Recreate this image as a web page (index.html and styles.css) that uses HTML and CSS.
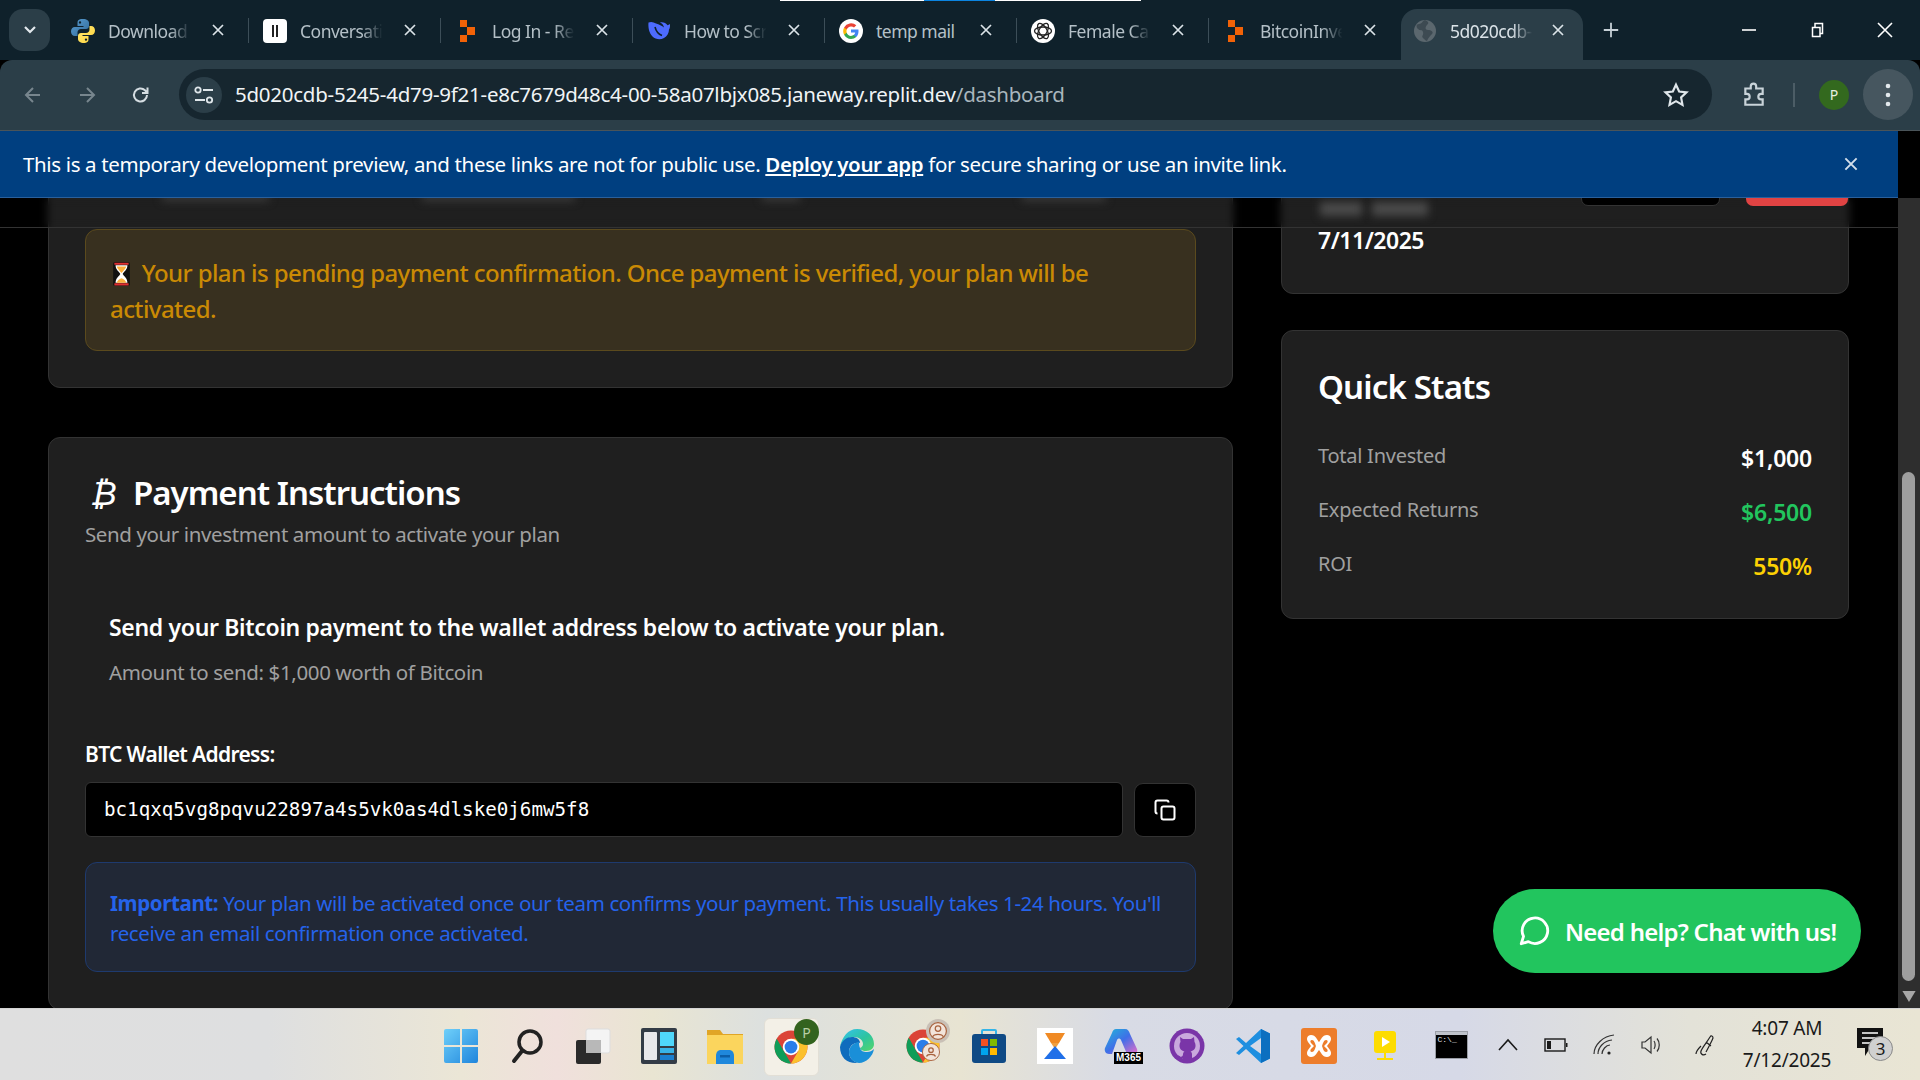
FILE: index.html
```html
<!DOCTYPE html>
<html lang="en">
<head>
<meta charset="utf-8">
<title>Dashboard</title>
<link rel="stylesheet" href="styles.css">
</head>
<body>
<svg class="defs" width="0" height="0" aria-hidden="true">
  <defs>
    <symbol id="x" viewBox="0 0 16 16"><path d="M3 3l10 10M13 3L3 13" fill="none" stroke="currentColor" stroke-width="1.7"/></symbol>
    <symbol id="replit" viewBox="0 0 24 24"><path d="M5 1h7v7H5zM12 8h8v8h-8zM5 16h7v7H5z" fill="#f26207"/></symbol>
    <symbol id="chrome" viewBox="0 0 48 48">
      <circle cx="24" cy="24" r="22" fill="#db4437"/>
      <path d="M5 13l9.5 16.5L24 46A22 22 0 0 1 5 13z" fill="#0f9d58"/>
      <path d="M43 13a22 22 0 0 1-19 33l9.5-16.5L24 13z" fill="#fbc02d"/>
      <circle cx="24" cy="24" r="11" fill="#fff"/><circle cx="24" cy="24" r="8.5" fill="#2b7de9"/>
    </symbol>
    <linearGradient id="winG" x1="0" y1="0" x2="1" y2="1"><stop offset="0" stop-color="#6fd0fa"/><stop offset="1" stop-color="#1f85dc"/></linearGradient>
    <linearGradient id="edgeG" x1="0" y1="0" x2="1" y2="1"><stop offset="0" stop-color="#35c1f1"/><stop offset=".55" stop-color="#2dc4a0"/><stop offset="1" stop-color="#54d66a"/></linearGradient>
    <linearGradient id="m365G" x1="0" y1="0" x2="1" y2="1"><stop offset="0" stop-color="#20b8d8"/><stop offset=".5" stop-color="#3f6fe8"/><stop offset="1" stop-color="#e86fc8"/></linearGradient>
    <linearGradient id="pyB" x1="0" y1="0" x2="1" y2="1"><stop offset="0" stop-color="#5a9fd4"/><stop offset="1" stop-color="#306998"/></linearGradient>
    <linearGradient id="pyY" x1="0" y1="0" x2="1" y2="1"><stop offset="0" stop-color="#ffe873"/><stop offset="1" stop-color="#ffd43b"/></linearGradient>
  </defs>
</svg>

<div class="load-bar"><span class="lb-white"></span><span class="lb-blue"></span><span class="lb-white"></span></div>

<header class="tabstrip">
  <button class="tab-search"><svg width="14" height="10" viewBox="0 0 14 10"><path d="M2 2l5 5 5-5" fill="none" stroke="#e3e9ed" stroke-width="2.2"/></svg></button>
  <div class="tab">
    <svg class="fav" viewBox="0 0 24 24"><path d="M12 0C7 0 6.5 2 6.5 4v3H12.500v1H4C1.500 8 0 10 0 12.500S1.500 17 4 17h2.500v-3.500c0-2 1.500-3.500 3.500-3.500h5c1.700 0 3-1.300 3-3V4c0-2-2-4-6-4zM9 2.200a1.200 1.200 0 1 1 0 2.400 1.200 1.200 0 0 1 0-2.400z" fill="url(#pyB)"/><path d="M12 24c5 0 5.500-2 5.500-4v-3H11.500v-1H20c2.500 0 4-2 4-4.500S22.500 7 20 7h-1.500v3.500c0 2-1.500 3.500-3.500 3.500h-5c-1.700 0-3 1.300-3 3V20c0 2 2 4 6 4zm3-2.200a1.200 1.200 0 1 1 0-2.400 1.200 1.200 0 0 1 0 2.400z" fill="url(#pyY)"/></svg>
    <span class="tab-title">Download</span><svg class="tab-x"><use href="#x"/></svg>
  </div>
  <div class="tab">
    <svg class="fav" viewBox="0 0 24 24"><rect width="24" height="24" rx="4" fill="#fff"/><path d="M9 6h2v12H9zM13 6h2v12h-2z" fill="#222"/></svg>
    <span class="tab-title">Conversation</span><svg class="tab-x"><use href="#x"/></svg>
  </div>
  <div class="tab">
    <svg class="fav" viewBox="0 0 24 24"><use href="#replit"/></svg>
    <span class="tab-title">Log In - Replit</span><svg class="tab-x"><use href="#x"/></svg>
  </div>
  <div class="tab">
    <svg class="fav" viewBox="0 0 24 24"><path d="M23 5c-1 .6-1.500 1-2.500 1.200C19 4 16 2.800 13 3.500c2 .8 3.500 2.500 4 5-2-1.500-5-3.500-8-4C6.500 3 4 2.500 1.500 3.500 1 8 2 14 5.500 17.500c3 3 8 3.500 11.500 1.500 3-1.500 5-5 5-8.500.7-.8 1.200-2.500 1-5.500z" fill="#4d6bfe"/><path d="M8 8c1 4 3 7 7 8.500" fill="none" stroke="#0f212b" stroke-width="1.600"/></svg>
    <span class="tab-title">How to Scrape</span><svg class="tab-x"><use href="#x"/></svg>
  </div>
  <div class="tab">
    <svg class="fav" viewBox="0 0 24 24"><circle cx="12" cy="12" r="12" fill="#fff"/><path d="M19.500 12.200c0-.6 0-1.100-.1-1.600H12v3h4.200a3.600 3.600 0 0 1-1.600 2.400v2h2.600c1.500-1.400 2.300-3.400 2.300-5.800z" fill="#4285f4"/><path d="M12 20c2.100 0 3.900-.7 5.200-1.900l-2.600-2c-.7.500-1.600.8-2.600.8-2 0-3.700-1.400-4.300-3.200H5.100v2.100A8 8 0 0 0 12 20z" fill="#34a853"/><path d="M7.700 13.700a4.800 4.800 0 0 1 0-3.100V8.500H5.100a8 8 0 0 0 0 7.300z" fill="#fbbc05"/><path d="M12 7.400c1.200 0 2.200.4 3 1.200l2.300-2.300A8 8 0 0 0 5.100 8.500l2.600 2.100c.6-1.800 2.300-3.200 4.300-3.200z" fill="#ea4335"/></svg>
    <span class="tab-title tab-title-full">temp mail</span><svg class="tab-x"><use href="#x"/></svg>
  </div>
  <div class="tab">
    <svg class="fav" viewBox="0 0 24 24"><circle cx="12" cy="12" r="12" fill="#fff"/><g fill="none" stroke="#222" stroke-width="1.300"><ellipse cx="12" cy="12" rx="8.500" ry="4"/><ellipse cx="12" cy="12" rx="8.500" ry="4" transform="rotate(60 12 12)"/><ellipse cx="12" cy="12" rx="8.500" ry="4" transform="rotate(120 12 12)"/></g></svg>
    <span class="tab-title">Female Calls</span><svg class="tab-x"><use href="#x"/></svg>
  </div>
  <div class="tab tab-last">
    <svg class="fav" viewBox="0 0 24 24"><use href="#replit"/></svg>
    <span class="tab-title">BitcoinInvest</span><svg class="tab-x"><use href="#x"/></svg>
  </div>
  <div class="tab tab-active">
    <svg class="fav" viewBox="0 0 24 24"><circle cx="12" cy="12" r="11" fill="#5b676e"/><path d="M12 1c-3 1-3 4-6 4S3 8 5 10s4 0 5 3-2 4 0 6 3 3 4 3c1-3 3-5 5-7s-1-4-4-4-3-3-1-5 2-3-2-5z" fill="#3d4a52"/></svg>
    <span class="tab-title">5d020cdb-5245</span><svg class="tab-x"><use href="#x"/></svg>
  </div>
  <svg class="new-tab" viewBox="0 0 20 20"><path d="M10 2v16M2 10h16" stroke="#c6d0d6" stroke-width="2"/></svg>
  <div class="win-controls">
    <svg class="win-btn" viewBox="0 0 16 16"><path d="M1 8h14" stroke="#fff" stroke-width="1.600"/></svg>
    <svg class="win-btn" viewBox="0 0 16 16"><path d="M3.500 5.500h7.500v9H3.500zM6 5V1.500h7.500V11.500H11.500" fill="none" stroke="#fff" stroke-width="1.500"/></svg>
    <svg class="win-btn" viewBox="0 0 16 16"><path d="M1 1l14 14M15 1L1 15" stroke="#fff" stroke-width="1.600"/></svg>
  </div>
</header>

<nav class="toolbar">
  <svg class="nav-ic dim" viewBox="0 0 20 20"><path d="M17 10H3M10 3l-7 7 7 7" fill="none" stroke="currentColor" stroke-width="2"/></svg>
  <svg class="nav-ic dim" viewBox="0 0 20 20"><path d="M3 10h14M10 3l7 7-7 7" fill="none" stroke="currentColor" stroke-width="2"/></svg>
  <svg class="nav-ic" viewBox="0 0 20 20"><path d="M16 10a6.500 6.500 0 1 1-2-4.700L16.500 8M16.500 2.500V8H11" fill="none" stroke="currentColor" stroke-width="2"/></svg>
  <div class="omnibox">
    <span class="site-info"><svg width="20" height="20" viewBox="0 0 20 20"><g fill="none" stroke="#dfe6ea" stroke-width="1.800"><path d="M9 5h10M1 15h10"/><circle cx="4" cy="5" r="2.700"/><circle cx="15.500" cy="15" r="2.700"/></g></svg></span>
    <span class="url">5d020cdb-5245-4d79-9f21-e8c7679d48c4-00-58a07lbjx085.janeway.replit.dev<span class="url-path">/dashboard</span></span>
    <svg class="star" viewBox="0 0 24 24"><path d="M12 2.500l2.900 6.300 6.800.8-5 4.700 1.300 6.800-6-3.400-6 3.400 1.300-6.800-5-4.700 6.800-.8z" fill="none" stroke="#dfe6ea" stroke-width="2"/></svg>
  </div>
  <svg class="ext" viewBox="0 0 24 24"><path d="M4 6h5V4a2.500 2.500 0 0 1 5 0v2h6v5h-1.500a2.500 2.500 0 0 0 0 5H20v5H4v-5h1.500a2.500 2.500 0 0 0 0-5H4z" fill="none" stroke="#c9d3d9" stroke-width="2"/></svg>
  <span class="tb-divider"></span>
  <span class="avatar">P</span>
  <span class="kebab"><svg width="6" height="24" viewBox="0 0 6 24"><g fill="#e3e9ed"><circle cx="3" cy="3" r="2.300"/><circle cx="3" cy="12" r="2.300"/><circle cx="3" cy="21" r="2.300"/></g></svg></span>
</nav>

<div class="banner">
  <p class="banner-text">This is a temporary development preview, and these links are not for public use. <a class="banner-link">Deploy your app</a> for secure sharing or use an invite link.</p>
  <svg class="banner-x"><use href="#x"/></svg>
</div>

<div class="viewport">
  <main class="page">
    <section class="col-main">
      <div class="card card-plan">
        <div class="alert-pending">
          <svg class="hourglass" viewBox="0 0 16 24" preserveAspectRatio="none"><rect x="1" y="1" width="14" height="22" rx="1.500" fill="#111"/><path d="M3 4h10c0 4-3 6-4 8 1 2 4 4 4 8H3c0-4 3-6 4-8-1-2-4-4-4-8z" fill="#fff"/><path d="M4 5h8c-.5 2-2.500 4-4 6-1.500-2-3.500-4-4-6zM4 20c.5-2 2-3 4-4 2 1 3.500 2 4 4z" fill="#fcb03c"/><path d="M2 2.500h12M2 21.500h12" stroke="#e03030" stroke-width="2"/></svg>
          <span>Your plan is pending payment confirmation. Once payment is verified, your plan will be activated.</span>
        </div>
      </div>
      <div class="card card-pay">
        <div class="pay-head">
          <span class="btc-ic">₿</span>
          <h2 class="pay-title">Payment Instructions</h2>
        </div>
        <p class="pay-sub">Send your investment amount to activate your plan</p>
        <div class="pay-info">
          <h3 class="pay-lead">Send your Bitcoin payment to the wallet address below to activate your plan.</h3>
          <p class="pay-amount">Amount to send: $1,000 worth of Bitcoin</p>
        </div>
        <label class="wallet-label">BTC Wallet Address:</label>
        <div class="wallet-row">
          <div class="wallet-input">bc1qxq5vg8pqvu22897a4s5vk0as4dlske0j6mw5f8</div>
          <button class="copy-btn"><svg width="24" height="24" viewBox="0 0 24 24" fill="none" stroke="#fff" stroke-width="2"><rect x="8.500" y="8.500" width="13" height="13" rx="2"/><path d="M4.500 15.500C3 15.500 2.500 14.500 2.500 13.500V4.500c0-1.200 1-2 2-2h9c1 0 2 .5 2 2"/></svg></button>
        </div>
        <div class="note"><strong>Important:</strong> Your plan will be activated once our team confirms your payment. This usually takes 1-24 hours. You'll receive an email confirmation once activated.</div>
      </div>
    </section>
    <aside class="col-side">
      <div class="card card-date"><span class="date-val">7/11/2025</span></div>
      <div class="card card-stats">
        <h2 class="stats-title">Quick Stats</h2>
        <div class="stat-row"><span class="stat-label">Total Invested</span><span class="stat-val">$1,000</span></div>
        <div class="stat-row"><span class="stat-label">Expected Returns</span><span class="stat-val stat-green">$6,500</span></div>
        <div class="stat-row"><span class="stat-label">ROI</span><span class="stat-val stat-yellow">550%</span></div>
      </div>
    </aside>
  </main>

  <div class="sticky-head">
    <span class="blob blob-1"></span><span class="blob blob-2"></span><span class="blob blob-3"></span><span class="blob blob-4"></span><span class="blob blob-5"></span><span class="blob blob-6"></span>
    <span class="head-btn head-black"></span><span class="head-btn head-red"></span>
  </div>

  <button class="chat-btn">
    <svg width="34" height="34" viewBox="0 0 24 24" fill="none" stroke="#fff" stroke-width="2"><path d="M3 21l1.600-5.200A9 9 0 1 1 8 19.500z" stroke-linejoin="round"/></svg>
    <span>Need help? Chat with us!</span>
  </button>

  <div class="scrollbar">
    <svg class="sb-arrow" viewBox="0 0 12 10"><path d="M6 0l6 10H0z" fill="#a8a8a8"/></svg>
    <div class="sb-track"><div class="sb-thumb"></div></div>
    <svg class="sb-arrow" viewBox="0 0 12 10"><path d="M0 0h12L6 10z" fill="#a8a8a8"/></svg>
  </div>
</div>

<footer class="taskbar">
  <div class="tb-apps">
    <div class="tb-app"><svg class="tb-ic" viewBox="0 0 36 36"><path d="M1 3a2 2 0 0 1 2-2h14v16H1zM19 1h14a2 2 0 0 1 2 2v14H19zM1 19h16v16H3a2 2 0 0 1-2-2zM19 19h16v14a2 2 0 0 1-2 2H19z" fill="url(#winG)"/></svg></div>
    <div class="tb-app"><svg class="tb-ic" viewBox="0 0 36 36" fill="none" stroke="#222"><circle cx="21" cy="14" r="11" stroke-width="3.500"/><path d="M13 23L5 33" stroke-width="4" stroke-linecap="round"/></svg></div>
    <div class="tb-app"><svg class="tb-ic" viewBox="0 0 36 36"><rect x="11" y="1" width="24" height="24" rx="2" fill="#f4f4f4" stroke="#ddd"/><rect x="1" y="12" width="25" height="24" rx="2" fill="#2a2a2a"/><rect x="11" y="12" width="15" height="13" fill="#b8b8b8"/></svg></div>
    <div class="tb-app"><svg class="tb-ic" viewBox="0 0 36 36"><rect width="36" height="36" rx="2" fill="#333c46"/><rect x="3" y="4" width="13" height="28" rx="1" fill="#e8e8ea"/><rect x="19" y="4" width="14" height="14" fill="#4fd7fb"/><rect x="19" y="20" width="14" height="5" fill="#38b4e8"/><rect x="19" y="27" width="14" height="5" fill="#1a7fd0"/></svg></div>
    <div class="tb-app tb-running"><svg class="tb-ic" viewBox="0 0 36 36"><path d="M0 2h13l3 4h20v30H0z" fill="#e0a526"/><rect y="7" width="36" height="29" fill="#fbd55d"/><path d="M9 36v-8c0-4 2-6 5-6h8c3 0 5 2 5 6v8z" fill="#1f88dc"/><rect x="13" y="27" width="10" height="2.500" fill="#0c5ea8"/></svg></div>
    <div class="tb-app tb-active">
      <span class="tb-tile"></span>
      <svg class="tb-ic tb-over" viewBox="0 0 48 48"><use href="#chrome"/></svg>
      <span class="tb-badge tb-badge-p">P</span>
    </div>
    <div class="tb-app"><svg class="tb-ic" viewBox="0 0 36 36"><path d="M18 1c10 0 17 7 17 15 0 4-3 7-8 7-4 0-6-2-6-3 0 0 3-1 3-4 0-4-4-7-9-7-7 0-12 5-14 10C3 9 9 1 18 1z" fill="url(#edgeG)"/><path d="M1 19c2-7 7-10 12-10 4 0 8 2 8 6-6-1-11 3-11 9 0 5 3 9 9 11C9 36 1 30 1 19z" fill="#0f6cbd"/><path d="M21 20c1 3 3 4 7 4 3 0 5-1 7-3-1 7-8 14-15 14-6-1-10-5-10-11 0-5 4-9 10-10 0 2 0 4 1 6z" fill="#1a8fd8"/></svg></div>
    <div class="tb-app tb-running">
      <svg class="tb-ic" viewBox="0 0 48 48"><use href="#chrome"/></svg>
      <svg class="tb-person tb-person-a" viewBox="0 0 20 20"><circle cx="10" cy="10" r="10" fill="#c9c0b6"/><circle cx="10" cy="10" r="7" fill="#f2e4da" stroke="#a8623e"/><circle cx="10" cy="8" r="2.300" fill="none" stroke="#a8623e"/><path d="M5.500 15c1-3 8-3 9 0" fill="none" stroke="#a8623e"/></svg>
      <svg class="tb-person tb-person-b" viewBox="0 0 20 20"><circle cx="10" cy="10" r="9.500" fill="#f2e4da" stroke="#a8623e"/><circle cx="10" cy="8" r="2.500" fill="none" stroke="#a8623e" stroke-width="1.400"/><path d="M5 15c1-3 9-3 10 0" fill="none" stroke="#a8623e" stroke-width="1.400"/></svg>
    </div>
    <div class="tb-app"><svg class="tb-ic" viewBox="0 0 36 36"><path d="M11 8V3a1 1 0 0 1 1-1h12a1 1 0 0 1 1 1v5" fill="none" stroke="#33b4e8" stroke-width="2"/><rect x="1" y="6" width="34" height="29" rx="3" fill="#0f4a85"/><rect x="10" y="11" width="7" height="7" fill="#f25022"/><rect x="19" y="11" width="7" height="7" fill="#7fba00"/><rect x="10" y="20" width="7" height="7" fill="#00a4ef"/><rect x="19" y="20" width="7" height="7" fill="#ffb900"/></svg></div>
    <div class="tb-app"><svg class="tb-ic" viewBox="0 0 36 36"><rect width="36" height="36" fill="#fff"/><path d="M8 5h20L22 15h-8z" fill="#f08a24"/><path d="M14 15h8l-4 6z" fill="#f0a040"/><path d="M18 18l11 13H7z" fill="#1f6fe8"/></svg></div>
    <div class="tb-app">
      <svg class="tb-ic" viewBox="0 0 36 36"><path d="M13 1h9c3 0 4 2 5 5l7 15c1 3-1 5-4 5h-6l-6-14c-1-2-3-2-4 0l-5 14H6C3 26 1 23 2 20L9 5c1-3 2-4 4-4z" fill="url(#m365G)"/></svg>
      <span class="m365">M365</span>
    </div>
    <div class="tb-app"><svg class="tb-ic" viewBox="0 0 36 36"><circle cx="18" cy="18" r="17.500" fill="#7a35a8"/><circle cx="18" cy="18" r="13" fill="#c9a8dd"/><path d="M11 9l3 2h8l3-2 .5 5c1 1.500 1 3 1 4 0 3-2.500 5-5 5.500 1 .5 1.500 1.500 1.500 3V33h-9v-3c-3 .5-4.500-.5-5.500-3 1.500.5 2.500 1.500 3.500 2 .5-.5 2-1 2-2.500 0-1.500.5-2.500 1.500-3-2.500-.5-5-2.500-5-5.500 0-1 0-2.500 1-4z" fill="#7a35a8"/></svg></div>
    <div class="tb-app tb-running"><svg class="tb-ic" viewBox="0 0 36 36"><path d="M26 1l9 4.500v25L26 35 11 21l-7 6-3-2 7.500-7L1 11l3-2 7 6z" fill="#1e8fe0"/><path d="M26 1l9 4.500v25L26 35z" fill="#0b6fc0"/><path d="M26 10L15 18l11 8z" fill="#d6d9e6"/></svg></div>
    <div class="tb-app"><svg class="tb-ic" viewBox="0 0 36 36"><rect width="36" height="36" rx="3" fill="#ed7d2b"/><path d="M10 7c5 0 6 5 8 7 2-2 3-7 8-7 4 0 5 4 3 7l-3 4 3 4c2 3 1 7-3 7-5 0-6-5-8-7-2 2-3 7-8 7-4 0-5-4-3-7l3-4-3-4c-2-3-1-7 3-7z" fill="#fff"/><path d="M11 12c2 0 3 3 4 6-1 3-2 6-4 6s-2-2-1-3l3-3-3-3c-1-1-1-3 1-3zM25 12c-2 0-3 3-4 6 1 3 2 6 4 6s2-2 1-3l-3-3 3-3c1-1 1-3-1-3z" fill="#ed7d2b"/></svg></div>
    <div class="tb-app"><svg class="tb-ic" viewBox="0 0 36 36"><rect x="7" y="3" width="22" height="22" rx="3" fill="#fddc00"/><path d="M15 9l8 5-8 5z" fill="#fff"/><path d="M18 25v5M10 31h16" stroke="#fddc00" stroke-width="2"/></svg></div>
    <div class="tb-app tb-running">
      <div class="term"><span class="term-bar"></span><span class="term-text">C:\_</span></div>
    </div>
  </div>
  <div class="tray">
    <svg class="tray-ic" viewBox="0 0 24 24"><path d="M3 17l9-10 9 10" fill="none" stroke="#1a1a1a" stroke-width="1.600"/></svg>
    <svg class="tray-ic" viewBox="0 0 24 24"><rect x="1" y="6" width="20" height="12" fill="none" stroke="#1a1a1a" stroke-width="1.400"/><rect x="3" y="8" width="4" height="8" fill="#1a1a1a"/><rect x="22" y="10" width="1.500" height="4" fill="#1a1a1a"/></svg>
    <svg class="tray-ic" viewBox="0 0 24 24"><g fill="none" stroke="#333" stroke-width="1.200"><path d="M2 21C2 12 11 3 22 2"/><path d="M6 21c0-7 6-13 14-14"/><path d="M10 21c0-4 4-9 8-9"/></g><circle cx="17" cy="20" r="1.600" fill="#222"/></svg>
    <svg class="tray-ic" viewBox="0 0 24 24"><g fill="none" stroke="#333" stroke-width="1.200"><path d="M2 9h3l6-5v16l-6-5H2z"/><path d="M14 8c1.500 2 1.500 6 0 8M17 5.500c3 3.500 3 9.500 0 13"/></g></svg>
    <svg class="tray-ic tray-pen" viewBox="0 0 24 24"><g fill="none" stroke="#222" stroke-width="1.200"><path d="M13 21c-3 2-6 0-5-3s6-9 9-14c1-2 3-1 3 1-2 5-5 10-7 14M13 9l5 4"/><path d="M8 13c-2 2-5 5-5 8"/></g></svg>
    <div class="clock"><span>4:07 AM</span><span>7/12/2025</span></div>
    <div class="notif">
      <svg width="26" height="30" viewBox="0 0 26 30"><path d="M0 0h26v20H13l-5 8v-8H0z" fill="#111"/><path d="M5 5h16M5 10h16M5 15h16" stroke="#fff" stroke-width="1.500"/></svg>
      <span class="notif-count">3</span>
    </div>
  </div>
</footer>
</body>
</html>
```

FILE: styles.css
```css
* { box-sizing: border-box; }
html, body { margin: 0; height: 100%; }
body {
  width: 1920px;
  height: 1080px;
  overflow: hidden;
  display: flex;
  flex-direction: column;
  position: relative;
  font-family: "Noto Sans", "Open Sans", sans-serif;
  background: #000;
  color: #fff;
}
.defs { position: absolute; }
button { font: inherit; border: 0; padding: 0; color: inherit; }
h2, h3, p { margin: 0; }

/* top loading strip */
.load-bar { position: absolute; left: 780px; top: 0; display: flex; height: 1px; z-index: 5; }
.lb-white { width: 144px; background: #fff; }
.lb-white:last-child { width: 146px; }
.lb-blue { width: 71px; background: #0b84e0; }

/* tab strip */
.tabstrip {
  height: 60px;
  flex: none;
  background: #0f212b;
  display: flex;
  align-items: flex-end;
  padding-left: 9px;
}
.tab-search {
  width: 41px; height: 42px;
  margin: 0 7px 9px 0;
  border-radius: 14px;
  background: #2b3e48;
  display: flex; align-items: center; justify-content: center;
}
.tab {
  width: 192px;
  height: 51px;
  flex: none;
  display: flex;
  align-items: center;
  padding-left: 14px;
  position: relative;
  color: #b4c0c7;
  font-size: 17.5px;
}
.tab::after {
  content: "";
  position: absolute;
  right: 0; top: 9px;
  width: 1.5px; height: 25px;
  background: #3c4e58;
}
.tab-last::after, .tab-active::after { display: none; }
.fav { width: 24px; height: 24px; flex: none; margin-right: 13px; transform: translateY(-4px); }
.tab-title {
  width: 86px;
  white-space: nowrap;
  overflow: hidden;
  letter-spacing: -0.5px;
  transform: translateY(-4px);
  -webkit-mask-image: linear-gradient(to right, #000 72%, transparent 96%);
  mask-image: linear-gradient(to right, #000 72%, transparent 96%);
}
.tab-title-full { -webkit-mask-image: none; mask-image: none; }
.tab-x { width: 16px; height: 16px; margin-left: 16px; color: #dbe3e8; transform: translateY(-5px); }
.tab-active {
  background: #2b3e48;
  border-radius: 16px 16px 0 0;
  width: 182px;
  padding-left: 12px;
  color: #dbe3e8;
}
.tab-active .tab-x { margin-left: 14px; }
.new-tab { width: 18px; height: 18px; margin: 0 0 21px 19px; flex: none; }
.win-controls { margin-left: auto; display: flex; gap: 52px; padding: 0 27px 22px 0; }
.win-btn { width: 16px; height: 16px; }

/* toolbar */
.toolbar {
  height: 71px;
  flex: none;
  background: #2b3e48;
  border-bottom: 1px solid #4a5459;
  border-radius: 12px 12px 0 0;
  display: flex;
  align-items: center;
  padding: 0 7px 1px 23px;
  color: #d5dde2;
}
.nav-ic { width: 20px; height: 20px; margin-right: 34px; flex: none; }
.nav-ic.dim { color: #78868e; }
.omnibox {
  width: 1533px;
  margin-left: -6px;
  height: 51px;
  border-radius: 26px;
  background: #16262f;
  display: flex;
  align-items: center;
  padding: 0 23px 0 7px;
  flex: none;
}
.site-info {
  width: 36px; height: 36px;
  border-radius: 50%;
  background: #2b3e48;
  display: flex; align-items: center; justify-content: center;
  flex: none;
}
.url { margin: -2px 0 0 13px; font-size: 20.5px; letter-spacing: -0.25px; color: #f0f4f6; white-space: nowrap; }
.url-path { color: #a9b6bd; }
.star { width: 26px; height: 26px; margin-left: auto; }
.ext { width: 26px; height: 26px; margin-left: 29px; flex: none; }
.tb-divider { width: 2px; height: 24px; background: #4c5d66; margin-left: 26px; flex: none; }
.avatar {
  width: 30px; height: 30px;
  border-radius: 50%;
  background: #33691e;
  font-size: 14px; color: #e8f0e0;
  display: flex; align-items: center; justify-content: center;
  margin-left: 24px; flex: none;
}
.kebab {
  width: 50px; height: 51px;
  border-radius: 50%;
  background: #46565f;
  display: flex; align-items: center; justify-content: center;
  margin-left: 14px; flex: none;
}

/* banner */
.banner {
  height: 67px;
  flex: none;
  margin-right: 22px;
  background: #003f80;
  border-bottom: 1px solid #2a609c;
  display: flex;
  align-items: center;
  padding: 0 38px 0 23px;
  position: relative;
  z-index: 3;
}
.banner-text { font-size: 20.5px; letter-spacing: -0.36px; white-space: nowrap; }
.banner-link { font-weight: 600; text-decoration: underline; }
.banner-x { width: 18px; height: 18px; margin-left: auto; color: #d3dfeb; }

/* viewport */
.viewport {
  flex: 1;
  min-height: 0;
  display: flex;
  position: relative;
  overflow: hidden;
  background: #000;
}
.page {
  flex: 1;
  min-width: 0;
  display: grid;
  grid-template-columns: 1185px 568px;
  column-gap: 48px;
  align-content: start;
  padding-left: 48px;
}
.card { background: #1f1f1f; border: 1px solid #333; border-radius: 12px; }
.col-main { display: flex; flex-direction: column; gap: 49px; margin-top: -20px; }
.col-side { display: flex; flex-direction: column; gap: 36px; margin-top: -20px; }

.card-plan { padding: 50px 36px 36px; }
.alert-pending {
  height: 122px;
  background: #38301f;
  border: 1px solid #5b4a1d;
  border-radius: 12px;
  padding: 25px 24px 0;
  font-size: 24px;
  line-height: 36px;
  font-weight: 500;
  letter-spacing: -0.59px;
  color: #ca8a04;
}
.hourglass { width: 19px; height: 26px; vertical-align: -5px; margin: 0 5px 0 2px; }

.card-pay { padding: 32px 36px 0; height: 573px; }
.pay-head { display: flex; align-items: center; height: 46px; }
.btc-ic { width: 48px; padding-left: 5px; font-size: 34px; font-style: italic; line-height: 46px; font-family: "DejaVu Sans", sans-serif; }
.pay-title { font-size: 33px; font-weight: 600; letter-spacing: -1px; line-height: 46px; }
.pay-sub { font-size: 20.5px; letter-spacing: -0.39px; color: #a0a0a0; line-height: 30px; margin-top: 3px; }
.pay-info { padding: 62px 24px 0; }
.pay-lead { font-size: 23px; font-weight: 600; letter-spacing: -0.33px; line-height: 32px; }
.pay-amount { font-size: 20.5px; letter-spacing: -0.36px; color: #a0a0a0; line-height: 30px; margin-top: 14px; }
.wallet-label { display: block; font-size: 21px; font-weight: 600; letter-spacing: -0.66px; line-height: 28px; margin-top: 53px; }
.wallet-row { display: flex; gap: 11px; align-items: center; margin-top: 14px; }
.wallet-input {
  flex: 1;
  height: 55px;
  background: #000;
  border: 1px solid #333;
  border-radius: 6px;
  padding: 0 18px;
  display: flex;
  align-items: center;
  font-family: "DejaVu Sans Mono", "Liberation Mono", monospace;
  font-size: 19.2px;
}
.copy-btn {
  width: 62px; height: 54px;
  background: #000;
  border: 1px solid #333;
  border-radius: 9px;
  display: flex; align-items: center; justify-content: center;
  flex: none;
}
.note {
  margin-top: 25px;
  height: 110px;
  background: #212836;
  border: 1px solid #1e3a6e;
  border-radius: 12px;
  padding: 25px 24px;
  font-size: 20.5px;
  letter-spacing: -0.38px;
  line-height: 30px;
  color: #2563eb;
}

.card-date { height: 116px; padding-top: 44px; padding-left: 36px; }
.date-val { font-size: 23px; font-weight: 600; letter-spacing: -0.5px; line-height: 34px; }
.card-stats { height: 289px; padding: 33px 36px 0; }
.stats-title { font-size: 33px; font-weight: 600; letter-spacing: -0.85px; line-height: 46px; margin-bottom: 30px; }
.stat-row { display: flex; justify-content: space-between; align-items: flex-start; height: 54px; }
.stat-label { font-size: 20px; letter-spacing: -0.25px; color: #a0a0a0; line-height: 30px; padding-top: 1px; }
.stat-val { font-size: 23px; font-weight: 600; letter-spacing: -0.2px; line-height: 36px; }
.stat-green { color: #22c55e; }
.stat-yellow { color: #fcd003; }

/* sticky header under banner */
.sticky-head {
  position: absolute;
  left: 0; right: 22px; top: 0;
  height: 30px;
  border-bottom: 1px solid #333;
  -webkit-backdrop-filter: blur(4px);
  backdrop-filter: blur(4px);
}
.blob { position: absolute; background: #3c3c3c; filter: blur(4px); }
.blob-1 { left: 162px; top: -4px; width: 107px; height: 7px; }
.blob-2 { left: 422px; top: -4px; width: 153px; height: 7px; }
.blob-3 { left: 762px; top: -4px; width: 38px; height: 7px; }
.blob-4 { left: 1022px; top: -4px; width: 84px; height: 7px; }
.blob-5 { left: 1320px; top: 4px; width: 42px; height: 14px; background: #4a4a4a; }
.blob-6 { left: 1372px; top: 4px; width: 56px; height: 14px; background: #4a4a4a; }
.head-btn { position: absolute; top: -20px; height: 28px; border-radius: 7px; }
.head-black { left: 1581px; width: 139px; background: #000; border: 1px solid #333; }
.head-red { left: 1746px; width: 102px; background: #e04343; }

/* chat */
.chat-btn {
  position: absolute;
  left: 1493px; top: 691px;
  width: 368px; height: 84px;
  border-radius: 42px;
  background: #22c55e;
  display: flex;
  align-items: center;
  gap: 14px;
  padding-left: 24px;
  font-size: 24px;
  font-weight: 600;
  letter-spacing: -0.75px;
  color: #fff;
  white-space: nowrap;
}

/* scrollbar */
.scrollbar {
  width: 22px;
  flex: none;
  background: #2e2e2e;
  display: flex;
  flex-direction: column;
  align-items: center;
  margin-top: -67px;
  position: relative;
  z-index: 4;
  padding: 6px 0 6px;
}
.sb-arrow { width: 14px; height: 11px; flex: none; }
.sb-track { flex: 1; width: 100%; padding: 0 4px; display: flex; flex-direction: column; justify-content: flex-end; }
.sb-thumb { height: 509px; width: 13px; background: #9e9e9e; border-radius: 7px; margin-bottom: 10px; }

/* taskbar */
.taskbar {
  height: 72px;
  flex: none;
  display: flex;
  align-items: flex-start;
  justify-content: space-between;
  padding-left: 428px;
  background: linear-gradient(90deg, #dfdfdf 0%, #dedfe0 14%, #ebe6d6 24%, #f0e0dc 29%, #e9e5d2 34%, #dce0df 40%, #e8e4d2 50%, #d8dbe5 58%, #d6d9e7 76%, #e3e2d8 88%, #e9e5d4 100%);
  border-top: 1px solid #d4d4d4;
}
.tb-apps { display: flex; padding-top: 19px; flex: none; }
.tb-app {
  width: 66px;
  height: 52px;
  flex: none;
  display: flex;
  justify-content: center;
  position: relative;
}
.tb-ic { width: 36px; height: 36px; }
.tb-running::after {
  content: "";
  position: absolute;
  left: 50%; bottom: -6px;
  width: 9px; height: 5px;
  margin-left: -4px;
  border-radius: 3px;
  background: #7c7c7c;
}
.tb-tile { position: absolute; left: 6px; top: -10px; width: 55px; height: 58px; background: #f3f0e7; border: 1px solid #e2dfd6; border-radius: 6px; }
.tb-active::after {
  content: "";
  position: absolute;
  left: 21px; bottom: -6px;
  width: 24px; height: 5px;
  border-radius: 3px;
  background: #0078d4;
}
.tb-over { position: relative; top: 1px; }
.tb-badge-p {
  position: absolute;
  left: 36px; top: -9px;
  width: 25px; height: 26px;
  border-radius: 50%;
  background: #33631e;
  color: #b9cfa5;
  font-size: 14px;
  display: flex; align-items: center; justify-content: center;
}
.tb-person { position: absolute; }
.tb-person-a { left: 36px; top: -9px; width: 24px; height: 24px; }
.tb-person-b { left: 32px; top: 14px; width: 18px; height: 20px; }
.m365 {
  position: absolute;
  left: 26px; top: 24px;
  padding: 0 2px;
  background: #000;
  color: #fff;
  font-family: "Liberation Sans", sans-serif;
  font-size: 10px;
  font-weight: 700;
  line-height: 12px;
}
.term {
  width: 33px; height: 28px;
  margin-top: 3px;
  background: #000;
  border: 1px solid #9a9ea6;
  position: relative;
  font-family: "Liberation Mono", monospace;
  color: #e8e8e8;
}
.term-bar { display: block; height: 3px; background: #bfc3cb; }
.term-text { display: block; font-size: 8px; line-height: 9px; padding-left: 2px; }

.tray { display: flex; align-items: center; height: 71px; padding-right: 37px; flex: none; }
.tray-ic { width: 24px; height: 24px; margin-right: 24px; flex: none; }
.tray-pen { margin-left: 5px; }
.clock { display: flex; flex-direction: column; align-items: center; gap: 9px; width: 100px; margin: 0 20px 0 -4px; font-size: 19px; line-height: 23px; color: #1a1a1a; letter-spacing: -0.2px; }
.notif { position: relative; width: 26px; height: 30px; margin-top: -4px; }
.notif svg { display: block; }
.notif-count {
  position: absolute;
  left: 11px; top: 8px;
  width: 25px; height: 25px;
  border-radius: 50%;
  background: #d0d0d0;
  border: 1px solid #888;
  color: #1a1a1a;
  font-size: 17px;
  display: flex; align-items: center; justify-content: center;
}
```
